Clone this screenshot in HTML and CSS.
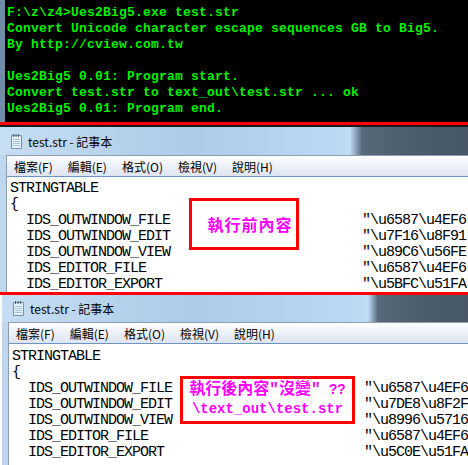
FILE: index.html
```html
<!DOCTYPE html>
<html lang="zh-Hant">
<head>
    <meta charset="UTF-8">
    <meta name="viewport" content="width=device-width, initial-scale=1.0">
    <title>Ues2Big5</title>
    <link rel="stylesheet" href="styles.css">
</head>
<body>
    <section class="console">
<pre>F:\z\z4>Ues2Big5.exe test.str
Convert Unicode character escape sequences GB to Big5.
By http://cview.com.tw

Ues2Big5 0.01: Program start.
Convert test.str to text_out\test.str ... ok
Ues2Big5 0.01: Program end.</pre>
    </section>

    <div class="cut"></div>

    <section class="notepad first">
        <div class="titlebar">
            <svg class="app-icon" width="15" height="17" viewBox="0 0 15 17">
                <path d="M2.5 2.5h10v13h-10z" fill="#e4f0fa" stroke="#7890a8"/>
                <path d="M4 6.5h7M4 8.5h7M4 10.5h7M4 12.5h7" stroke="#a8c2da"/>
                <path d="M4.5 1v3M7 1v3M9.5 1v3" stroke="#4f6376"/>
            </svg>
            <span>test.str - 記事本</span>
        </div>
        <div class="client">
            <nav class="menubar">
                <span>檔案(F)</span>
                <span>編輯(E)</span>
                <span>格式(O)</span>
                <span>檢視(V)</span>
                <span>說明(H)</span>
            </nav>
            <div class="editor">
                <div class="ln">STRINGTABLE</div>
                <div class="ln">{</div>
                <div class="ln row"><span class="key">IDS_OUTWINDOW_FILE</span><span>"\u6587\u4EF6"</span></div>
                <div class="ln row"><span class="key">IDS_OUTWINDOW_EDIT</span><span>"\u7F16\u8F91"</span></div>
                <div class="ln row"><span class="key">IDS_OUTWINDOW_VIEW</span><span>"\u89C6\u56FE"</span></div>
                <div class="ln row"><span class="key">IDS_EDITOR_FILE</span><span>"\u6587\u4EF6"</span></div>
                <div class="ln row"><span class="key">IDS_EDITOR_EXPORT</span><span>"\u5BFC\u51FA"</span></div>
                <div class="note note-before">執行前內容</div>
            </div>
        </div>
    </section>

    <div class="cut"></div>

    <section class="notepad second">
        <div class="titlebar">
            <svg class="app-icon" width="15" height="17" viewBox="0 0 15 17">
                <path d="M2.5 2.5h10v13h-10z" fill="#e4f0fa" stroke="#7890a8"/>
                <path d="M4 6.5h7M4 8.5h7M4 10.5h7M4 12.5h7" stroke="#a8c2da"/>
                <path d="M4.5 1v3M7 1v3M9.5 1v3" stroke="#4f6376"/>
            </svg>
            <span>test.str - 記事本</span>
        </div>
        <div class="client">
            <nav class="menubar">
                <span>檔案(F)</span>
                <span>編輯(E)</span>
                <span>格式(O)</span>
                <span>檢視(V)</span>
                <span>說明(H)</span>
            </nav>
            <div class="editor">
                <div class="ln">STRINGTABLE</div>
                <div class="ln">{</div>
                <div class="ln row"><span class="key">IDS_OUTWINDOW_FILE</span><span>"\u6587\u4EF6"</span></div>
                <div class="ln row"><span class="key">IDS_OUTWINDOW_EDIT</span><span>"\u7DE8\u8F2F"</span></div>
                <div class="ln row"><span class="key">IDS_OUTWINDOW_VIEW</span><span>"\u8996\u5716"</span></div>
                <div class="ln row"><span class="key">IDS_EDITOR_FILE</span><span>"\u6587\u4EF6"</span></div>
                <div class="ln row"><span class="key">IDS_EDITOR_EXPORT</span><span>"\u5C0E\u51FA"</span></div>
                <div class="note note-after">
                    <div><span class="cjk">執行後內容"沒變"</span> ??</div>
                    <div>\text_out\test.str</div>
                </div>
            </div>
        </div>
    </section>
</body>
</html>
```

FILE: styles.css
```css
* {
    margin: 0;
    padding: 0;
    box-sizing: border-box;
}

body {
    width: 468px;
    height: 465px;
    overflow: hidden;
    background: #fff;
    font-family: 'Noto Sans CJK TC', 'Noto Sans', sans-serif;
}

/* Console */
.console {
    height: 122px;
    background: #000;
    border-left: 5px solid #6f8da8;
    padding: 5px 0 0 2px;
    overflow: hidden;
}

.console pre {
    font-family: 'Liberation Mono', monospace;
    font-weight: bold;
    font-size: 13px;
    letter-spacing: 0.2px;
    line-height: 16px;
    color: #00f000;
}

/* Red separator */
.cut {
    height: 3px;
    background: #f00;
}

/* Notepad window */
.notepad {
    background: #bfd7ee;
    overflow: hidden;
}

.notepad.first {
    height: 167px;
    border-top: 2px solid #1a1a1a;
}

.notepad.second {
    height: 170px;
    margin-left: 2px;
}

.titlebar {
    height: 28px;
    display: flex;
    align-items: center;
    gap: 4px;
    padding-left: 9px;
    font-size: 12px;
    color: #000;
    background: linear-gradient(90deg, #c6def3 0, #abcbe8 190px, #b9d8f3 330px, #c0dcf6 350px, #56697a 362px, #4a5b6a 420px, #485867 100%);
}

.second .titlebar {
    height: 27px;
    background: linear-gradient(90deg, #c6def3 0, #abcbe8 190px, #b9d8f3 345px, #c0dcf6 366px, #56697a 376px, #4a5b6a 430px, #485867 100%);
}

.app-icon {
    flex: none;
}

.client {
    margin-left: 6px;
    border-left: 1px solid #8d9cae;
    border-top: 1px solid #8d9cae;
    height: 100%;
}

.menubar {
    height: 21px;
    display: flex;
    align-items: center;
    gap: 15px;
    padding-left: 7px;
    font-size: 12px;
    color: #000;
    background: linear-gradient(#fdfeff, #eef2f9 45%, #dde4f1);
    border-bottom: 1px solid #6e95c0;
}

.editor {
    position: relative;
    height: 100%;
    background: #fff;
    padding: 4px 0 0 3px;
    font-family: 'Liberation Mono', monospace;
    font-size: 15px;
    letter-spacing: -1px;
    line-height: 16px;
    color: #000;
    white-space: nowrap;
    overflow: hidden;
}

.second .editor {
    padding-top: 5px;
}

.row {
    display: grid;
    grid-template-columns: 352px max-content;
}

.key {
    padding-left: 16px;
}

/* Annotations */
.note {
    position: absolute;
    border: 3px solid #f00;
    background: #fff;
    color: #f0f;
    font-weight: bold;
    letter-spacing: 0;
}

.note-before {
    top: 21px;
    left: 182px;
    width: 110px;
    height: 52px;
    padding-left: 12px;
    display: flex;
    align-items: center;
    justify-content: center;
    font-family: 'Noto Sans CJK TC', sans-serif;
    font-size: 16px;
    letter-spacing: 1px;
}

.note-after {
    top: 32px;
    left: 171px;
    width: 175px;
    height: 48px;
    padding-top: 2px;
    text-align: center;
    font-family: 'Liberation Mono', 'Noto Sans CJK TC', monospace;
    font-size: 14px;
    line-height: 19px;
}

.note-after .cjk {
    font-family: 'Liberation Mono', 'Noto Sans CJK TC', monospace;
    font-size: 16px;
}
```
